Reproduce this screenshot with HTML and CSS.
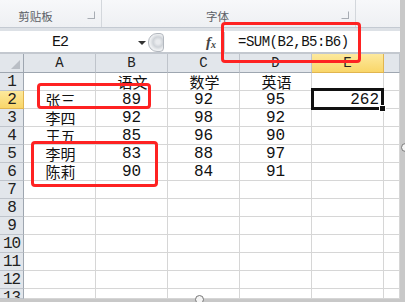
FILE: index.html
```html
<!DOCTYPE html>
<html lang="zh">
<head>
    <meta charset="UTF-8">
    <title>Excel - SUM</title>
    <link rel="stylesheet" href="styles.css">
</head>
<body>
    <div class="window">
        <div class="ribbon">
            <div class="group clip">
                <span class="label">剪贴板</span>
                <span class="launcher"></span>
            </div>
            <div class="group font">
                <span class="label">字体</span>
                <span class="launcher"></span>
            </div>
            <div class="group rest"></div>
        </div>

        <div class="formula-bar">
            <div class="name-box">
                <span class="name">E2</span>
                <span class="arrow"></span>
            </div>
            <div class="splitter"><span class="knob"></span></div>
            <div class="fx"><i>f</i><span>x</span></div>
            <div class="formula">=SUM(B2,B5:B6)</div>
        </div>

        <div class="sheet">
            <div class="cell hd corner"><span class="tri"></span></div>
            <div class="cell hd col">A</div>
            <div class="cell hd col">B</div>
            <div class="cell hd col">C</div>
            <div class="cell hd col">D</div>
            <div class="cell hd col active">E</div>
            <div class="cell hd col"></div>

            <div class="cell hd row">1</div>
            <div class="cell"></div>
            <div class="cell zh">语文</div>
            <div class="cell zh">数学</div>
            <div class="cell zh">英语</div>
            <div class="cell"></div>
            <div class="cell"></div>

            <div class="cell hd row active">2</div>
            <div class="cell zh">张三</div>
            <div class="cell">89</div>
            <div class="cell">92</div>
            <div class="cell">95</div>
            <div class="cell num">262</div>
            <div class="cell"></div>

            <div class="cell hd row">3</div>
            <div class="cell zh">李四</div>
            <div class="cell">92</div>
            <div class="cell">98</div>
            <div class="cell">92</div>
            <div class="cell"></div>
            <div class="cell"></div>

            <div class="cell hd row">4</div>
            <div class="cell zh">王五</div>
            <div class="cell">85</div>
            <div class="cell">96</div>
            <div class="cell">90</div>
            <div class="cell"></div>
            <div class="cell"></div>

            <div class="cell hd row">5</div>
            <div class="cell zh">李明</div>
            <div class="cell">83</div>
            <div class="cell">88</div>
            <div class="cell">97</div>
            <div class="cell"></div>
            <div class="cell"></div>

            <div class="cell hd row">6</div>
            <div class="cell zh">陈莉</div>
            <div class="cell">90</div>
            <div class="cell">84</div>
            <div class="cell">91</div>
            <div class="cell"></div>
            <div class="cell"></div>

            <div class="cell hd row">7</div>
            <div class="cell"></div><div class="cell"></div><div class="cell"></div><div class="cell"></div><div class="cell"></div><div class="cell"></div>
            <div class="cell hd row">8</div>
            <div class="cell"></div><div class="cell"></div><div class="cell"></div><div class="cell"></div><div class="cell"></div><div class="cell"></div>
            <div class="cell hd row">9</div>
            <div class="cell"></div><div class="cell"></div><div class="cell"></div><div class="cell"></div><div class="cell"></div><div class="cell"></div>
            <div class="cell hd row">10</div>
            <div class="cell"></div><div class="cell"></div><div class="cell"></div><div class="cell"></div><div class="cell"></div><div class="cell"></div>
            <div class="cell hd row">11</div>
            <div class="cell"></div><div class="cell"></div><div class="cell"></div><div class="cell"></div><div class="cell"></div><div class="cell"></div>
            <div class="cell hd row">12</div>
            <div class="cell"></div><div class="cell"></div><div class="cell"></div><div class="cell"></div><div class="cell"></div><div class="cell"></div>
            <div class="cell hd row">13</div>
            <div class="cell"></div><div class="cell"></div><div class="cell"></div><div class="cell"></div><div class="cell"></div><div class="cell"></div>
        </div>

        <div class="bottom-edge"><span class="handle bottom"></span></div>

        <!-- overlays: selected cell and the red marks -->
        <div class="selection"><span class="fill-handle"></span></div>
        <div class="mark mark-formula"></div>
        <div class="mark mark-row2"></div>
        <div class="mark mark-rows56"></div>
    </div>
    <div class="right-edge"><span class="handle side"></span></div>
</body>
</html>
```

FILE: styles.css
```css
body {
    margin: 0;
    padding: 0;
    width: 405px;
    height: 302px;
    overflow: hidden;
    display: flex;
    background-color: #ffffff;
    font-family: "Liberation Mono", "Noto Sans CJK SC", monospace;
    color: #111;
}

.window {
    width: 400px;
    height: 302px;
    position: relative;
    overflow: hidden;
}

/* ribbon */
.ribbon {
    display: flex;
    height: 27px;
    background: linear-gradient(#f7f8fa, #eef0f3);
    border-bottom: 1px solid #c4cad2;
    box-shadow: 0 3px 0 #dde1e6;
}

.ribbon .group {
    display: flex;
    align-items: flex-end;
    justify-content: center;
    position: relative;
    border-right: 1px solid #d3d7dc;
    padding-bottom: 4px;
    box-sizing: border-box;
}

.ribbon .clip {
    width: 102px;
    padding-right: 30px;
}

.ribbon .font {
    width: 254px;
    padding-right: 22px;
}

.ribbon .rest {
    flex: 1;
    border-right: none;
}

.ribbon .label {
    font-family: "Noto Sans CJK SC", sans-serif;
    font-size: 11.5px;
    line-height: 14px;
    color: #5b5f66;
}

.ribbon .launcher {
    position: absolute;
    right: 6px;
    bottom: 8px;
    width: 6px;
    height: 6px;
    border: 1px solid #a8adb4;
    border-top-color: transparent;
    border-left-color: transparent;
}

/* formula bar */
.formula-bar {
    display: flex;
    height: 20px;
    margin-top: 4px;
    background-color: #ffffff;
    border-bottom: 2px solid #c3c8cf;
}

.name-box {
    width: 148px;
    display: flex;
    align-items: center;
    position: relative;
}

.name-box .name {
    width: 120px;
    text-align: center;
    font-size: 15px;
    letter-spacing: -1px;
}

.name-box .arrow {
    position: absolute;
    left: 138px;
    top: 9px;
    border-left: 4px solid transparent;
    border-right: 4px solid transparent;
    border-top: 4px solid #333;
}

.splitter {
    width: 58px;
    display: flex;
    align-items: center;
}

.splitter .knob {
    width: 14px;
    height: 17px;
    border: 1px solid #b3b8bf;
    border-radius: 9px 4px 4px 9px;
    background: radial-gradient(circle at 9px 8px, #e9ebee 2px, #cfd3d8 5px, #eef0f2 8px);
}

.fx {
    width: 18px;
    display: flex;
    align-items: center;
    font-family: "Liberation Serif", serif;
    font-weight: bold;
    color: #444;
    border-right: 1px solid #c9ced4;
}

.fx i {
    font-size: 15px;
}

.fx span {
    font-size: 10px;
    font-style: italic;
    margin-top: 5px;
}

.formula {
    flex: 1;
    padding-left: 13px;
    font-size: 14px;
    letter-spacing: -0.5px;
    line-height: 20px;
}

/* sheet grid */
.sheet {
    display: grid;
    grid-template-columns: 24px repeat(5, 72px) 16px;
    grid-template-rows: 19px repeat(12, 18px) 10px;
}

.cell {
    box-sizing: border-box;
    border-right: 1px solid #d6d6d6;
    border-bottom: 1px solid #d6d6d6;
    text-align: center;
    font-size: 16px;
    line-height: 19px;
    overflow: hidden;
    white-space: nowrap;
}

.cell.zh {
    font-family: "Noto Sans CJK SC", sans-serif;
    font-size: 15px;
    line-height: 17px;
    padding-left: 2px;
}

.cell.num {
    text-align: right;
    padding-right: 4px;
}

.hd {
    background-color: #e2e6eb;
    border-color: #bfc4cb;
    color: #222;
}

.hd.col {
    font-size: 14px;
    line-height: 19px;
    border-bottom-color: #9ea6b0;
}

.hd.row {
    font-size: 16px;
    line-height: 19px;
    border-right-color: #9ea6b0;
    letter-spacing: -1px;
}

.hd.active {
    background: linear-gradient(#fde99d, #f9d669);
    border-color: #e1b54f;
}

.corner {
    position: relative;
    border-bottom-color: #9ea6b0;
    border-right-color: #9ea6b0;
}

.corner .tri {
    position: absolute;
    right: 3px;
    bottom: 3px;
    border-left: 9px solid transparent;
    border-bottom: 9px solid #b9bec5;
}

.bottom-edge {
    height: 4px;
    background-color: #c8c8c8;
    position: relative;
}

.right-edge {
    width: 5px;
    height: 302px;
    background-color: #c8c8c8;
    position: relative;
}

.handle {
    position: absolute;
    width: 7px;
    height: 7px;
    border: 1px solid #777;
    border-radius: 50%;
    background-color: #f4f4f4;
}

.handle.bottom {
    left: 195px;
    top: -4px;
}

.handle.side {
    left: 1px;
    top: 143px;
}

/* overlays */
.selection {
    position: absolute;
    left: 311px;
    top: 88px;
    width: 73px;
    height: 22px;
    box-sizing: border-box;
    border: 3px solid #111;
}

.fill-handle {
    position: absolute;
    right: -5px;
    bottom: -5px;
    width: 5px;
    height: 5px;
    background-color: #111;
    border: 1px solid #fff;
}

.mark {
    position: absolute;
    box-sizing: border-box;
    border: 3px solid #fe2222;
    border-radius: 4px;
}

.mark-formula {
    left: 221px;
    top: 22px;
    width: 140px;
    height: 41px;
}

.mark-row2 {
    left: 37px;
    top: 83px;
    width: 114px;
    height: 26px;
}

.mark-rows56 {
    left: 31px;
    top: 141px;
    width: 127px;
    height: 46px;
}
```
